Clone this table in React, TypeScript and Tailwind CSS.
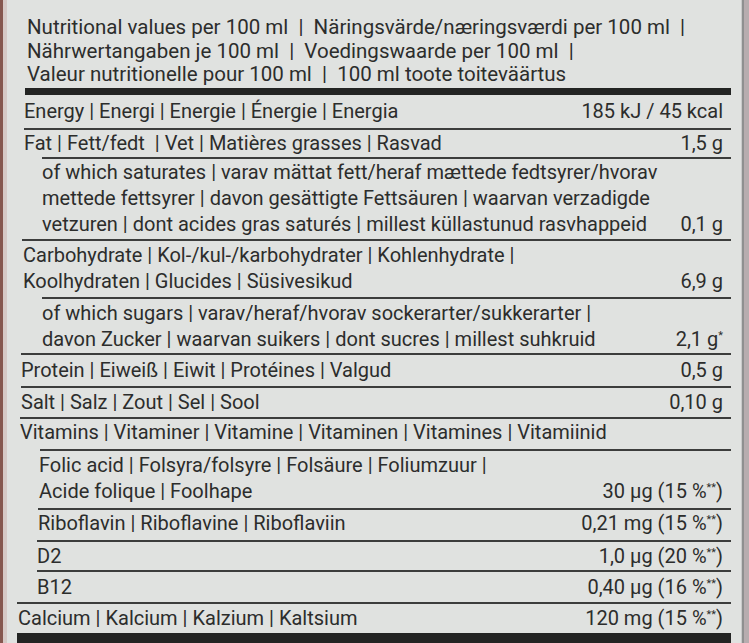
import React from "react";

type Row = {
  lines: string[];
  value?: React.ReactNode;
  indent: number;
  h: number;
  pt: number;
  lh: number;
  rule?: number; // left start of the rule under this row, thick if undefined
};

const Pct = ({ n }: { n: string }) => (
  <>
    ({n} %<sup className="text-[11px] leading-none -top-[7px]">**</sup>)
  </>
);

const rows: Row[] = [
  { lines: ["Energy | Energi | Energie | Énergie | Energia"], value: "185 kJ / 45 kcal", indent: 24, h: 33, pt: 4, lh: 24, rule: 24 },
  { lines: ["Fat | Fett/fedt  | Vet | Matières grasses | Rasvad"], value: "1,5 g", indent: 24, h: 27, pt: 1, lh: 24, rule: 42 },
  {
    lines: [
      "of which saturates | varav mättat fett/heraf mættede fedtsyrer/hvorav",
      "mettede fettsyrer | davon gesättigte Fettsäuren | waarvan verzadigde",
      "vetzuren | dont acides gras saturés | millest küllastunud rasvhappeid",
    ],
    value: "0,1 g",
    indent: 42,
    h: 80,
    pt: 0,
    lh: 26,
    rule: 22,
  },
  {
    lines: ["Carbohydrate | Kol-/kul-/karbohydrater | Kohlenhydrate |", "Koolhydraten | Glucides | Süsivesikud"],
    value: "6,9 g",
    indent: 23,
    h: 56,
    pt: 1,
    lh: 26,
    rule: 42,
  },
  {
    lines: ["of which sugars | varav/heraf/hvorav sockerarter/sukkerarter |", "davon Zucker | waarvan suikers | dont sucres | millest suhkruid"],
    value: (
      <>
        2,1 g<sup className="text-[11px] leading-none -top-[7px]">*</sup>
      </>
    ),
    indent: 42,
    h: 54,
    pt: 1,
    lh: 26,
    rule: 21,
  },
  { lines: ["Protein | Eiweiß | Eiwit | Protéines | Valgud"], value: "0,5 g", indent: 21, h: 31, pt: 3, lh: 24, rule: 21 },
  { lines: ["Salt | Salz | Zout | Sel | Sool"], value: "0,10 g", indent: 21, h: 29, pt: 2, lh: 24, rule: 20 },
  { lines: ["Vitamins | Vitaminer | Vitamine | Vitaminen | Vitamines | Vitamiinid"], indent: 20, h: 30, pt: 1, lh: 24, rule: 40 },
  {
    lines: ["Folic acid | Folsyra/folsyre | Folsäure | Foliumzuur |", "Acide folique | Foolhape"],
    value: (
      <>
        30 µg <Pct n="15" />
      </>
    ),
    indent: 39,
    h: 57,
    pt: 1,
    lh: 26,
    rule: 38,
  },
  {
    lines: ["Riboflavin | Riboflavine | Riboflaviin"],
    value: (
      <>
        0,21 mg <Pct n="15" />
      </>
    ),
    indent: 38,
    h: 30,
    pt: 1,
    lh: 24,
    rule: 37,
  },
  {
    lines: ["D2"],
    value: (
      <>
        1,0 µg <Pct n="20" />
      </>
    ),
    indent: 37,
    h: 28,
    pt: 2,
    lh: 24,
    rule: 37,
  },
  {
    lines: ["B12"],
    value: (
      <>
        0,40 µg <Pct n="16" />
      </>
    ),
    indent: 37,
    h: 30,
    pt: 3,
    lh: 24,
    rule: 17,
  },
  {
    lines: ["Calcium | Kalcium | Kalzium | Kaltsium"],
    value: (
      <>
        120 mg <Pct n="15" />
      </>
    ),
    indent: 18,
    h: 29,
    pt: 2,
    lh: 24,
  },
];

export default function App() {
  return (
    <div
      className="flex h-[643px] w-[749px] overflow-hidden bg-[#e0e2e0] text-[#2c2d2c]"
      style={{ fontFamily: "Roboto, 'Liberation Sans', sans-serif" }}
    >
      {/* carton edge on the left */}
      <div className="w-[3px] shrink-0 bg-[#86574f]" />
      <div className="w-[4px] shrink-0 bg-[#d6c9c6]" />

      <div className="relative w-[734px] shrink-0 pr-[10px]">
        <div className="pl-[20px] pt-[16px] text-[20.5px] leading-[23.5px]">
          <div>Nutritional values per 100 ml&nbsp; |&nbsp; Näringsvärde/næringsværdi per 100 ml&nbsp; |</div>
          <div>Nährwertangaben je 100 ml&nbsp; |&nbsp; Voedingswaarde per 100 ml&nbsp; |</div>
          <div>Valeur nutritionelle pour 100 ml&nbsp; |&nbsp; 100 ml toote toiteväärtus</div>
        </div>
        <div className="ml-[18px] mt-[1px] h-[7px] bg-[#232423]" />

        {rows.map((r, i) => (
          <div key={i}>
            <div
              className="flex items-end justify-between overflow-hidden pr-[8px] text-[20px]"
              style={{
                height: r.h,
                paddingTop: r.pt,
                paddingBottom: r.h - r.pt - r.lines.length * r.lh,
                paddingLeft: r.indent - 7,
                lineHeight: `${r.lh}px`,
              }}
            >
              <div>
                {r.lines.map((l) => (
                  <div key={l} className="whitespace-pre">
                    {l}
                  </div>
                ))}
              </div>
              {r.value && <div className="whitespace-nowrap">{r.value}</div>}
            </div>
            {r.rule !== undefined ? (
              <div className="h-[2px] bg-[#3c3d3c]" style={{ marginLeft: r.rule - 7 }} />
            ) : (
              <div className="ml-[10px] h-[12px] bg-[#232423]" />
            )}
          </div>
        ))}
      </div>

      {/* carton edge on the right */}
      <div className="w-[1px] shrink-0 bg-[#c9cbca]" />
      <div className="w-[2px] shrink-0 bg-[#8f9090]" />
      <div className="w-[5px] shrink-0 bg-[#b7adaf]" />
    </div>
  );
}
